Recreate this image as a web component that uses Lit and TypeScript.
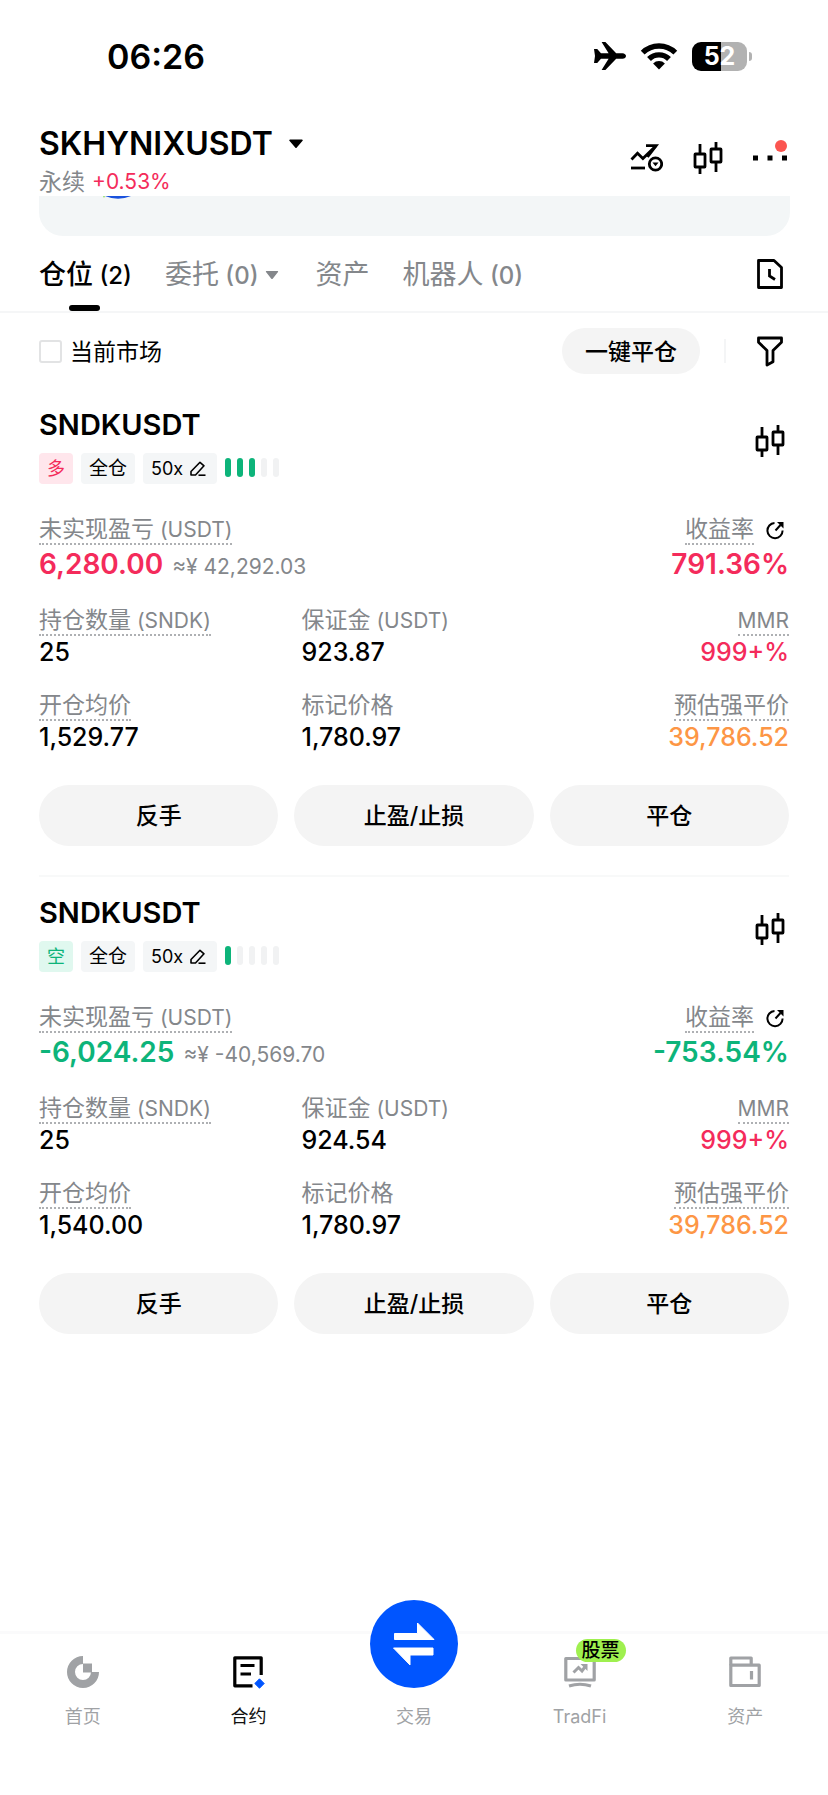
import { LitElement, html, css, svg, nothing } from "lit";
import { customElement, property, state } from "lit/decorators.js";
import { classMap } from "lit/directives/class-map.js";

const shared = css`
  *,
  *::before,
  *::after {
    box-sizing: border-box;
  }
  button {
    margin: 0;
    padding: 0;
    border: 0;
    background: none;
    color: inherit;
    font: inherit;
    cursor: pointer;
  }
  svg {
    display: block;
  }
  .icon-btn {
    display: grid;
    place-items: center;
    width: 38px;
    height: 36px;
  }
`;

const candleIcon = svg`
  <svg width="30" height="32" viewBox="0 0 30 32" fill="none" stroke="#000" stroke-width="2.8" aria-hidden="true">
    <rect x="2" y="12" width="10" height="13" rx="0.5" />
    <path d="M7 2v10M7 25v7" />
    <rect x="18" y="7" width="10" height="13" rx="0.5" />
    <path d="M23 0v7M23 20v10" />
  </svg>`;

const label = (cjk: string, latin = "") =>
  html`${cjk}${latin ? html`<span class="latin">${cjk ? " " : ""}${latin}</span>` : nothing}`;

interface Position {
  symbol: string;
  side: "long" | "short";
  leverage: string;
  level: number;
  pnl: string;
  pnlLocal: string;
  roi: string;
  size: string;
  margin: string;
  mmr: string;
  entry: string;
  mark: string;
  liquidation: string;
}

const positions: Position[] = [
  {
    symbol: "SNDKUSDT",
    side: "long",
    leverage: "50x",
    level: 3,
    pnl: "6,280.00",
    pnlLocal: "≈¥ 42,292.03",
    roi: "791.36%",
    size: "25",
    margin: "923.87",
    mmr: "999+%",
    entry: "1,529.77",
    mark: "1,780.97",
    liquidation: "39,786.52",
  },
  {
    symbol: "SNDKUSDT",
    side: "short",
    leverage: "50x",
    level: 1,
    pnl: "-6,024.25",
    pnlLocal: "≈¥ -40,569.70",
    roi: "-753.54%",
    size: "25",
    margin: "924.54",
    mmr: "999+%",
    entry: "1,540.00",
    mark: "1,780.97",
    liquidation: "39,786.52",
  },
];

@customElement("status-bar")
export class StatusBar extends LitElement {
  static styles = [
    shared,
    css`
      :host {
        display: flex;
        align-items: center;
        justify-content: space-between;
        height: 112px;
        padding: 0 76px 0 107px;
      }
      .time {
        padding-top: 2px;
        font-size: 34px;
        font-weight: 600;
        line-height: 40px;
      }
      .indicators {
        display: flex;
        align-items: center;
        gap: 14px;
      }
      .battery {
        display: flex;
        align-items: center;
        gap: 2px;
      }
      .cell {
        width: 55px;
        height: 29px;
        border-radius: 9px;
        background: linear-gradient(to right, #000 52%, #b2b2b2 52%);
        color: #fff;
        font-size: 25px;
        font-weight: 700;
        line-height: 29px;
        text-align: center;
      }
      .nub {
        width: 3px;
        height: 9px;
        border-radius: 0 4px 4px 0;
        background: #b2b2b2;
      }
    `,
  ];
  render() {
    return html`
      <span class="time">06:26</span>
      <div class="indicators">
        <svg width="32" height="28" viewBox="0 0 32 28" aria-hidden="true">
          <path
            d="M0 7h3.200l3.800 4.200h7.600L7.600 0h3.800l10.800 11.200h6.300c2 .2 3.500 1.300 3.500 2.800s-1.500 2.600-3.500 2.800h-6.300L11.400 28H7.600l7-11.200H7L3.200 21H0l1-7z"
          />
        </svg>
        <svg width="38" height="27" viewBox="0 0 38 27" fill="none" stroke="#000" stroke-width="5.4" aria-hidden="true">
          <path d="M2.700 9.700a23 23 0 0 1 32.600 0M9 16a14.100 14.100 0 0 1 20 0" />
          <path d="M19 26.500l-5.900-6a8.400 8.400 0 0 1 11.800 0z" fill="#000" stroke="none" />
        </svg>
        <div class="battery"><span class="cell">52</span><span class="nub"></span></div>
      </div>
    `;
  }
}

@customElement("pair-header")
export class PairHeader extends LitElement {
  static styles = [
    shared,
    css`
      :host {
        display: block;
      }
      .bar {
        display: flex;
        align-items: center;
        justify-content: space-between;
        padding: 12px 39px 0;
      }
      .pair {
        display: flex;
        align-items: center;
        gap: 15px;
        font-size: 32px;
        font-weight: 600;
        line-height: 40px;
      }
      .meta {
        display: flex;
        align-items: center;
        gap: 7px;
        padding-top: 4px;
        font-size: 23px;
        line-height: 28px;
        color: #84878b;
      }
      .change {
        font-size: 21px;
        color: #f42b5b;
      }
      .actions {
        display: flex;
        align-items: center;
        gap: 24px;
        padding-bottom: 4px;
      }
      .more {
        position: relative;
      }
      .dot {
        position: absolute;
        top: 0;
        right: 2px;
        width: 12px;
        height: 12px;
        border-radius: 50%;
        background: #fb5550;
      }
      .banner {
        height: 40px;
        margin: 0 38px 0 39px;
        padding-left: 64px;
        border-radius: 0 0 24px 24px;
        background: #f3f6f7;
        overflow: hidden;
      }
    `,
  ];
  render() {
    return html`
      <div class="bar">
        <div>
          <button class="pair" type="button">
            SKHYNIXUSDT
            <svg width="16" height="12" viewBox="0 0 16 12" aria-hidden="true">
              <path d="M2 1.500h12a.8.8 0 0 1 .6 1.300l-5.800 6.700a1 1 0 0 1-1.600 0L1.400 2.800A.8.8 0 0 1 2 1.500z" />
            </svg>
          </button>
          <div class="meta">永续 <span class="change">+0.53%</span></div>
        </div>
        <div class="actions">
          <button class="icon-btn" type="button" aria-label="图表交易">
            <svg width="34" height="30" viewBox="0 0 34 30" fill="none" stroke="#000" stroke-width="2.8" aria-hidden="true">
              <path d="M2.500 16.500l6-6.200 5.400 5.200L26.500 3.200" />
              <path d="M17 2.600h10.200L18.500 14" />
              <path d="M2 25h14" />
              <circle cx="26.500" cy="21" r="6.200" />
              <path d="M23.500 19.500h6l-3 3.800z" fill="#000" stroke="none" />
            </svg>
          </button>
          <button class="icon-btn" type="button" aria-label="K线">${candleIcon}</button>
          <button class="icon-btn more" type="button" aria-label="更多">
            <svg width="36" height="6" viewBox="0 0 36 6" aria-hidden="true">
              <path d="M1 0.500h5v5H1zM15.500 0.500h5v5h-5zM30 0.500h5v5h-5z" />
            </svg>
            <span class="dot"></span>
          </button>
        </div>
      </div>
      <div class="banner">
        <svg width="28" height="5" viewBox="0 0 28 5" aria-hidden="true">
          <path d="M2 0h26Q15 5.500 2 0z" fill="#1a52dd" />
          <path d="M0 0h2l-1 2z" fill="#8fe05a" />
        </svg>
      </div>
    `;
  }
}

@customElement("position-tabs")
export class PositionTabs extends LitElement {
  @state() private current = 0;
  private items = [
    { cjk: "仓位", latin: "(2)", menu: false },
    { cjk: "委托", latin: "(0)", menu: true },
    { cjk: "资产", latin: "", menu: false },
    { cjk: "机器人", latin: "(0)", menu: false },
  ];
  static styles = [
    shared,
    css`
      :host {
        display: flex;
        align-items: stretch;
        justify-content: space-between;
        padding: 0 39px;
        border-bottom: 2px solid #f5f6f7;
      }
      .tabs {
        display: flex;
        gap: 33px;
      }
      .tab {
        display: flex;
        align-items: center;
        gap: 6px;
        position: relative;
        height: 75px;
        padding-top: 3px;
        font-size: 27px;
        line-height: 36px;
        white-space: pre;
        color: #84878b;
      }
      .tab.active {
        color: #000;
        font-weight: 500;
      }
      .tab.active::after {
        content: "";
        position: absolute;
        left: 50%;
        bottom: 0;
        width: 31px;
        height: 6px;
        margin-left: -16px;
        border-radius: 3px;
        background: #000;
      }
      .latin {
        font-size: 24px;
        font-weight: 500;
      }
      .icon-btn {
        align-self: center;
      }
    `,
  ];
  render() {
    return html`
      <div class="tabs" role="tablist">
        ${this.items.map(
          (item, i) => html`<button
            type="button"
            role="tab"
            aria-selected=${i === this.current}
            class=${classMap({ tab: true, active: i === this.current })}
            @click=${() => (this.current = i)}
          ><span>${label(item.cjk, item.latin)}</span>${item.menu
            ? html`<svg width="18" height="12" viewBox="0 0 18 12" aria-hidden="true"><path d="M2.500 2h11a.6.6 0 0 1 .5 1l-5.300 6.700a1 1 0 0 1-1.400 0L2 3a.6.6 0 0 1 .5-1z" fill="#84878b" /></svg>`
            : nothing}</button>`
        )}
      </div>
      <button class="icon-btn" type="button" aria-label="历史记录">
        <svg width="28" height="32" viewBox="0 0 28 32" fill="none" stroke="#000" stroke-width="2.8" aria-hidden="true">
          <path d="M2.500 2.500h15.500l7.500 7v20h-23z" stroke-linejoin="round" />
          <path d="M13.500 11v7l5.500 3.500" />
        </svg>
      </button>
    `;
  }
}

@customElement("position-filter")
export class PositionFilter extends LitElement {
  static styles = [
    shared,
    css`
      :host {
        display: flex;
        align-items: center;
        justify-content: space-between;
        height: 76px;
        padding: 0 39px;
        font-size: 23px;
      }
      .market {
        display: flex;
        align-items: center;
        gap: 8px;
      }
      .text {
        padding-bottom: 2px;
      }
      .box {
        appearance: none;
        width: 23px;
        height: 23px;
        margin: 0;
        border: 2px solid #e2e3e4;
        border-radius: 3px;
        background: #fff;
      }
      .box:checked {
        background: #000;
      }
      .tools {
        display: flex;
        align-items: center;
      }
      .close-all {
        height: 46px;
        padding: 0 23px 2px;
        border-radius: 23px;
        background: #f4f4f4;
        font-weight: 500;
      }
      .divider {
        width: 2px;
        height: 24px;
        margin: 0 25px 0 24px;
        background: #f4f5f6;
      }
    `,
  ];
  render() {
    return html`
      <label class="market"><input class="box" type="checkbox" /><span class="text">当前市场</span></label>
      <div class="tools">
        <button class="close-all" type="button">一键平仓</button>
        <span class="divider"></span>
        <button class="icon-btn" type="button" aria-label="筛选">
          <svg width="28" height="32" viewBox="0 0 28 32" fill="none" stroke="#000" stroke-width="2.8" stroke-linejoin="round" aria-hidden="true">
            <path d="M2.500 3h23v4.200l-8.500 8.300v11.200l-6 3.300V15.500L2.500 7.200z" />
          </svg>
        </button>
      </div>
    `;
  }
}

@customElement("position-card")
export class PositionCard extends LitElement {
  @property({ attribute: false }) data!: Position;
  static styles = [
    shared,
    css`
      :host {
        display: block;
        padding: 18px 0 29px;
        margin: 0 39px;
        border-bottom: 2px solid #f8f9f9;
      }
      :host(:last-of-type) {
        border-bottom-color: transparent;
      }
      .head {
        display: flex;
        align-items: flex-start;
        justify-content: space-between;
      }
      .head .icon-btn {
        margin-top: 16px;
      }
      .symbol {
        margin: 0 0 10px;
        font-size: 29px;
        font-weight: 600;
        line-height: 36px;
      }
      .tags {
        display: flex;
        align-items: center;
        gap: 8px;
      }
      .tag {
        display: flex;
        align-items: center;
        gap: 7px;
        height: 31px;
        padding: 0 8px;
        border-radius: 4px;
        background: #f4f6f7;
        font-size: 19px;
        line-height: 31px;
      }
      .tag.lev {
        padding-right: 11px;
        font-size: 18px;
      }
      .tag.long,
      .tag.short {
        font-size: 18px;
      }
      .tag.long {
        background: #ffe6ec;
        color: #f42b5b;
      }
      .tag.short {
        background: #e0f8ef;
        color: #0db47a;
      }
      .bars {
        display: flex;
        gap: 6px;
        padding-bottom: 2px;
      }
      .bar {
        width: 6px;
        height: 19px;
        border-radius: 3px;
        background: #f1f2f3;
      }
      .bar.on {
        background: #0db47a;
      }
      .summary {
        display: flex;
        justify-content: space-between;
        margin-top: 31px;
      }
      .grid {
        display: grid;
        grid-template-columns: 35% 1fr auto;
        row-gap: 23px;
        margin-top: 24px;
      }
      .end {
        display: flex;
        flex-direction: column;
        align-items: flex-end;
      }
      .caption {
        display: flex;
        gap: 7px;
        height: 30px;
        font-size: 23px;
        line-height: 28px;
        color: #84878b;
        white-space: pre;
      }
      .term {
        height: 30px;
        border-bottom: 2px dotted #aeb0b3;
      }
      .latin {
        font-size: 21px;
      }
      .share {
        display: grid;
        place-items: center;
        width: 28px;
        height: 30px;
      }
      .pnl {
        display: flex;
        align-items: baseline;
        gap: 9px;
        height: 37px;
        font-size: 28px;
        font-weight: 600;
        line-height: 38px;
      }
      .local {
        font-size: 21px;
        font-weight: 400;
        line-height: 28px;
        color: #84878b;
      }
      .value {
        font-size: 25px;
        font-weight: 500;
        line-height: 32px;
      }
      .up {
        color: #f42b5b;
      }
      .down {
        color: #0db47a;
      }
      .warn {
        color: #fd9645;
      }
      .buttons {
        display: grid;
        grid-template-columns: repeat(3, 1fr);
        gap: 16px;
        margin-top: 32px;
      }
      .action {
        height: 61px;
        padding-bottom: 3px;
        border-radius: 31px;
        background: #f4f4f4;
        font-size: 23px;
        font-weight: 500;
      }
    `,
  ];
  render() {
    const d = this.data;
    const tone = d.side === "long" ? "up" : "down";
    return html`
      <div class="head">
        <div>
          <h2 class="symbol">${d.symbol}</h2>
          <div class="tags">
            <span class="tag ${d.side}">${d.side === "long" ? "多" : "空"}</span>
            <span class="tag">全仓</span>
            <button class="tag lev" type="button">
              ${d.leverage}
              <svg width="16" height="16" viewBox="0 0 16 16" fill="none" stroke="#000" stroke-width="1.6" stroke-linejoin="round" aria-hidden="true">
                <path d="M1 14v-3.500L10 1.300l4 3.500L5.500 14z" />
                <path d="M8.500 14.200H15.500" />
              </svg>
            </button>
            <span class="bars">
              ${[0, 1, 2, 3, 4].map((i) => html`<span class=${classMap({ bar: true, on: i < d.level })}></span>`)}
            </span>
          </div>
        </div>
        <button class="icon-btn" type="button" aria-label="K线">${candleIcon}</button>
      </div>
      <div class="summary">
        <div>
          <div class="caption"><span class="term">${label("未实现盈亏", "(USDT)")}</span></div>
          <div class="pnl ${tone}">${d.pnl}<span class="local">${d.pnlLocal}</span></div>
        </div>
        <div class="end">
          <div class="caption"><span class="term">收益率</span><button class="share" type="button" aria-label="分享"><svg width="20" height="20" viewBox="0 0 20 20" fill="none" stroke="#000" stroke-width="2" aria-hidden="true"><path d="M9.500 3A7.600 7.600 0 1 0 17.600 10.600" /><path d="M10.500 10.500L15.500 5" /><path d="M12 2h6.500v6.500z" fill="#000" stroke="none" /></svg></button></div>
          <div class="pnl ${tone}">${d.roi}</div>
        </div>
      </div>
      <div class="grid">
        <div>
          <div class="caption"><span class="term">${label("持仓数量", "(SNDK)")}</span></div>
          <div class="value">${d.size}</div>
        </div>
        <div>
          <div class="caption"><span>${label("保证金", "(USDT)")}</span></div>
          <div class="value">${d.margin}</div>
        </div>
        <div class="end">
          <div class="caption"><span class="term">${label("", "MMR")}</span></div>
          <div class="value up">${d.mmr}</div>
        </div>
        <div>
          <div class="caption"><span class="term">开仓均价</span></div>
          <div class="value">${d.entry}</div>
        </div>
        <div>
          <div class="caption"><span>标记价格</span></div>
          <div class="value">${d.mark}</div>
        </div>
        <div class="end">
          <div class="caption"><span class="term">预估强平价</span></div>
          <div class="value warn">${d.liquidation}</div>
        </div>
      </div>
      <div class="buttons">
        <button class="action" type="button">反手</button>
        <button class="action" type="button">止盈/止损</button>
        <button class="action" type="button">平仓</button>
      </div>
    `;
  }
}

@customElement("bottom-nav")
export class BottomNav extends LitElement {
  static styles = [
    shared,
    css`
      :host {
        display: grid;
        grid-template-columns: repeat(5, 1fr);
        padding: 18px 0 66px;
        border-top: 3px solid #fafafb;
      }
      .item {
        display: flex;
        flex-direction: column;
        align-items: center;
        gap: 13px;
        color: #a0a2a5;
        font-size: 18px;
        line-height: 24px;
        text-decoration: none;
      }
      .item.active {
        color: #111;
      }
      .glyph {
        display: grid;
        place-items: center;
        position: relative;
        width: 40px;
        height: 40px;
      }
      .badge {
        position: absolute;
        left: 16px;
        top: -13px;
        height: 23px;
        padding: 0 6px;
        border-radius: 12px;
        background: #9ff04f;
        color: #000;
        font-size: 19px;
        font-weight: 500;
        line-height: 23px;
        white-space: nowrap;
      }
      .trade {
        display: grid;
        place-items: center;
        width: 88px;
        height: 88px;
        margin: -52px 0 4px;
        border-radius: 50%;
        background: #0055ff;
      }
    `,
  ];
  render() {
    return html`
      <a class="item" href="#home">
        <span class="glyph">
          <svg width="34" height="34" viewBox="0 0 34 34" aria-hidden="true">
            <path d="M17 5A12 12 0 1 0 29 17" fill="none" stroke="#a0a2a5" stroke-width="8" />
            <path d="M17 8.500h9v9h-9z" fill="#a0a2a5" />
          </svg>
        </span>
        首页
      </a>
      <a class="item active" href="#futures" aria-current="page">
        <span class="glyph">
          <svg width="34" height="34" viewBox="0 0 34 34" fill="none" stroke="#000" stroke-width="3.2" aria-hidden="true">
            <path d="M21.500 30.800H3.800V2.800h26.400V20" stroke-linejoin="round" />
            <path d="M9.500 10.500h14M9.500 19h10.500" />
            <path d="M28.500 23.800l4.700 4.700-4.700 4.700-4.700-4.700z" fill="#0055ff" stroke="#0055ff" stroke-width="1" stroke-linejoin="round" />
          </svg>
        </span>
        合约
      </a>
      <a class="item" href="#trade">
        <span class="trade">
          <svg width="42" height="44" viewBox="0 0 42 44" fill="#fff" stroke="#fff" stroke-width="1" stroke-linejoin="round" aria-hidden="true">
            <path d="M1.500 11.500h23V1L41 17.500H1.500z" />
            <path d="M40 26H.5L17 43V33h23z" />
          </svg>
        </span>
        交易
      </a>
      <a class="item" href="#tradfi">
        <span class="glyph">
          <svg width="34" height="34" viewBox="0 0 34 34" fill="none" stroke="#a0a2a5" stroke-width="3.2" aria-hidden="true">
            <path d="M2.800 3.500h28.400v21.500H2.800z" stroke-linejoin="round" />
            <path d="M10.500 17.500l5-5 3.500 3.500 4-5.500" stroke-width="3" />
            <path d="M17.500 9h7v7z" fill="#a0a2a5" stroke="none" />
            <path d="M6 31q11-3.500 22 0" />
          </svg>
          <span class="badge">股票</span>
        </span>
        TradFi
      </a>
      <a class="item" href="#assets">
        <span class="glyph">
          <svg width="34" height="34" viewBox="0 0 34 34" fill="none" stroke="#a0a2a5" stroke-width="3.2" stroke-linejoin="round" aria-hidden="true">
            <path d="M2.800 10.200h28.400v20.300H2.800z" />
            <path d="M2.800 10.200V3h20.400v7.200" />
            <path d="M23.500 16v8.500" />
          </svg>
        </span>
        资产
      </a>
    `;
  }
}

@customElement("app-root")
export class AppRoot extends LitElement {
  static styles = [
    shared,
    css`
      :host {
        display: flex;
        flex-direction: column;
        min-height: 100vh;
        background: #fff;
        color: #000;
        font-family: Inter, "Noto Sans CJK SC", sans-serif;
      }
      .nav {
        margin-top: auto;
      }
    `,
  ];
  render() {
    return html`
      <status-bar></status-bar>
      <pair-header></pair-header>
      <position-tabs></position-tabs>
      <position-filter></position-filter>
      ${positions.map((p) => html`<position-card .data=${p}></position-card>`)}
      <bottom-nav class="nav"></bottom-nav>
    `;
  }
}
